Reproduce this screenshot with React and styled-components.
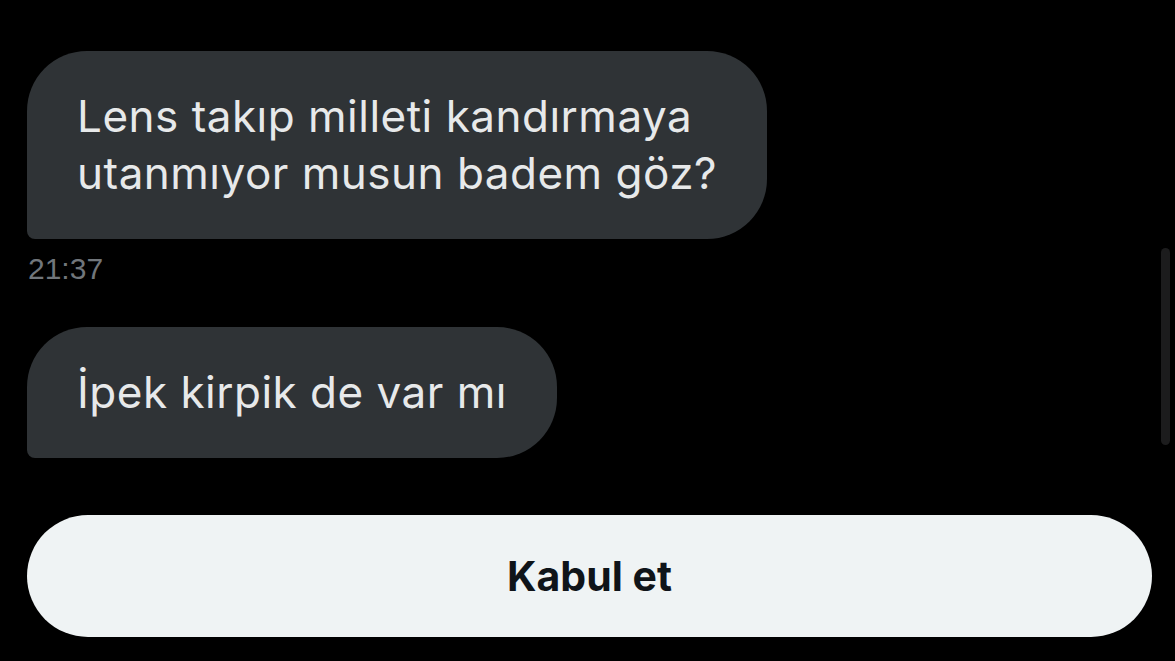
import React from "react";
import styled, { createGlobalStyle } from "styled-components";

const Global = createGlobalStyle`
  html, body { margin: 0; padding: 0; background: #000; }
  body { font-family: Inter, "Noto Sans", "Liberation Sans", sans-serif; }
`;

const Page = styled.div`
  position: relative;
  width: 1175px;
  height: 661px;
  overflow: hidden;
  background: #000;
  box-sizing: border-box;
  padding: 51px 23px 0 27px;
  display: flex;
  flex-direction: column;
  align-items: flex-start;
`;

const Bubble = styled.div`
  background: #2f3336;
  color: #e7e9ea;
  font-size: 44px;
  letter-spacing: 0.5px;
  line-height: 57px;
  padding: 37px 50px 37px 50px;
  border-radius: 60px 60px 60px 8px;
  margin-top: ${(p) => p.$mt || 0}px;
`;

const Time = styled.div`
  color: #71767b;
  font-family: "Liberation Sans", Arial, sans-serif;
  font-size: 30px;
  line-height: 34px;
  margin-top: 13px;
  padding-left: 1px;
`;

const Button = styled.button`
  align-self: stretch;
  margin-top: 57px;
  height: 122px;
  border: none;
  border-radius: 61px;
  background: #eff3f4;
  color: #0f1419;
  font-family: inherit;
  font-size: 41px;
  font-weight: 700;
  cursor: pointer;
`;

const Scrollbar = styled.div`
  position: absolute;
  left: 1161px;
  top: 248px;
  width: 9px;
  height: 197px;
  border-radius: 5px;
  background: #1c1c1d;
`;

export default function App() {
  return (
    <>
      <Global />
      <Page>
        <Bubble>
          Lens takıp milleti kandırmaya
          <br />
          utanmıyor musun badem göz?
        </Bubble>
        <Time>21:37</Time>
        <Bubble $mt={41}>İpek kirpik de var mı</Bubble>
        <Button>Kabul et</Button>
        <Scrollbar />
      </Page>
    </>
  );
}
